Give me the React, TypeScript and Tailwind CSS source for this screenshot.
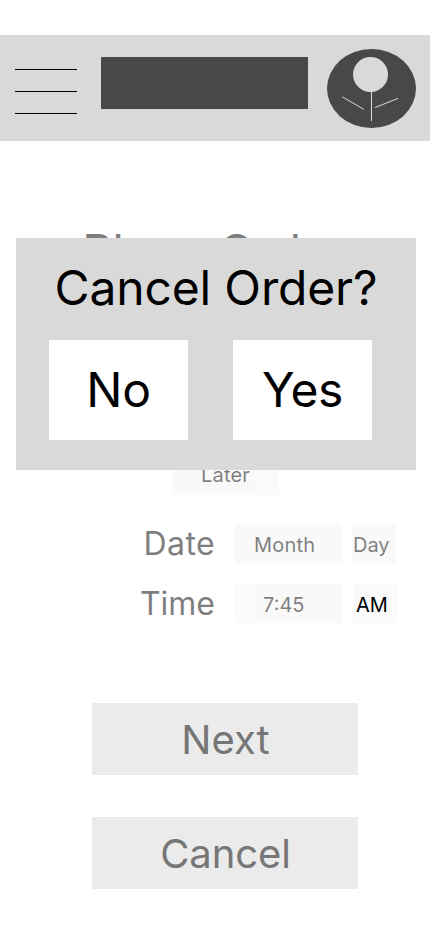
function Header() {
  return (
    <header className="mt-[35px] flex h-[106px] items-start bg-[#d9d9d9]">
      <div className="ml-[15px] mt-[34px] flex w-[62px] flex-col gap-[21px]">
        <div className="h-px bg-black" />
        <div className="h-px bg-black" />
        <div className="h-px bg-black" />
      </div>
      <div className="ml-6 mt-[22px] h-[52px] w-[207px] bg-[#484848]" />
      <svg className="ml-[19px] mt-3.5 h-[79px] w-[89px]" viewBox="0 0 89 79" fill="none">
        <ellipse cx="44.5" cy="39.5" rx="44.5" ry="39.5" fill="#484848" />
        <circle cx="43.5" cy="25.5" r="17.5" fill="#d9d9d9" />
        <path d="M44.5 42V72M15.2 47.8L36.8 60.3M48 58.6L71 49.4" stroke="#d9d9d9" strokeWidth="1" />
      </svg>
    </header>
  );
}

function CancelDialog() {
  return (
    <div className="absolute left-4 top-[238px] h-[232px] w-[400px] bg-[#d9d9d9] pt-[21px] text-5xl leading-[58px]">
      <h2 className="ml-[38.5px] h-[58px] whitespace-nowrap tracking-[-0.15px]">Cancel Order?</h2>
      <div className="ml-[33px] mt-[23px] flex gap-[45px]">
        <button className="flex h-[100px] w-[139px] justify-center bg-white pt-[21px] tracking-[-0.1px]">No</button>
        <button className="flex h-[100px] w-[139px] justify-center bg-white pt-[21px] tracking-[-0.4px]">Yes</button>
      </div>
    </div>
  );
}

export default function App() {
  return (
    <div className="relative flex h-[932px] w-[430px] flex-col overflow-hidden bg-white font-['Inter',sans-serif] text-black">
      <Header />
      <main className="flex flex-col">
        <h1 className="ml-[82px] mt-[82px] h-[58px] whitespace-nowrap text-5xl leading-[58px] tracking-[-0.3px] opacity-50">Place Order</h1>
        <div className="ml-[172px] mt-[175px] h-[39px] w-[107px] bg-[#f5f5f5] pl-[29px] pt-[7px] text-xl leading-6 tracking-[0.2px] opacity-50">Later</div>
        <div className="mt-[29px] flex h-[39px] text-xl leading-6 opacity-50">
          <div className="w-[215px] text-right text-[32px] leading-[39px] tracking-[0.4px]">Date</div>
          <div className="ml-5 w-[107px] bg-[#f5f5f5] pl-[19px] pt-[9px] tracking-[0.2px]">Month</div>
          <div className="ml-2.5 w-11 bg-[#f5f5f5] pl-px pt-[9px]">Day</div>
        </div>
        <div className="mt-[21px] flex h-[39px] text-xl leading-6">
          <div className="w-[215px] text-right text-[32px] leading-[39px] opacity-50">Time</div>
          <div className="ml-5 w-[107px] bg-[#f5f5f5] pl-7 pt-[9px] opacity-50">7:45</div>
          <div className="ml-[11px] w-11 bg-[#fafafa] pl-[3px] pt-[9px]">AM</div>
        </div>
        <div className="ml-[92px] mt-20 flex w-[266px] flex-col gap-[42px] text-[40px] leading-[48px] text-[#767676]">
          <button className="flex h-[72px] justify-center bg-[#ebebeb] pt-[13px] pl-px">Next</button>
          <button className="flex h-[72px] justify-center bg-[#ebebeb] pt-[13px] pl-px tracking-[-0.1px]">Cancel</button>
        </div>
      </main>
      <CancelDialog />
    </div>
  );
}
